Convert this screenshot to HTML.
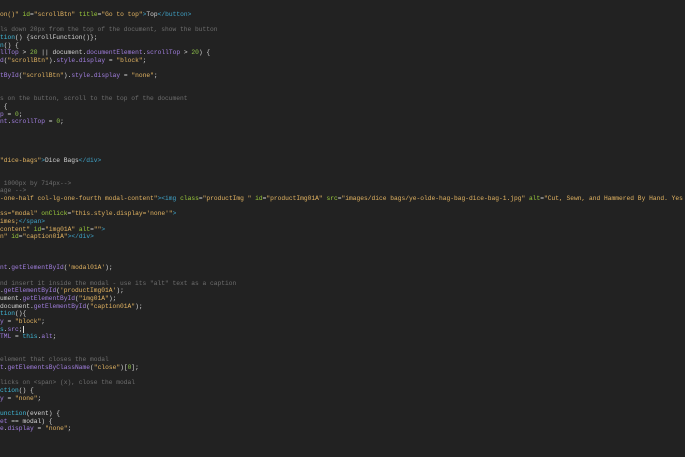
<!DOCTYPE html>
<html><head><meta charset="utf-8"><style>
html,body{margin:0;padding:0;background:#222222;width:685px;height:457px;overflow:hidden}
pre{margin:0;position:absolute;left:0;top:11px;font-family:"Liberation Mono",monospace;font-size:6.25px;line-height:7.67px;color:#d4d4d4;white-space:pre}
.c{color:#6e6e6e}.a{color:#9ccc3c}.s{color:#e3b462}.t{color:#3fa3c8}.m{color:#a27fe0}.n{color:#8fc14a}.k{color:#40b8d8}
.cur{border-left:1px solid #ddd}
</style></head><body><pre>
<span class="s">on()"</span> <span class="a">id</span>=<span class="s">"scrollBtn"</span> <span class="a">title</span>=<span class="s">"Go to top"</span><span class="t">&gt;</span>Top<span class="t">&lt;/button&gt;</span>

<span class="c">ls down 20px from the top of the document, show the button</span>
<span class="k">tion</span>() {scrollFunction()};
<span class="k">n</span>() {
<span class="m">llTop</span> &gt; <span class="n">20</span> || document.<span class="m">documentElement</span>.<span class="m">scrollTop</span> &gt; <span class="n">20</span>) {
<span class="m">d</span>(<span class="s">"scrollBtn"</span>).<span class="m">style</span>.<span class="m">display</span> = <span class="s">"block"</span>;

<span class="m">tById</span>(<span class="s">"scrollBtn"</span>).<span class="m">style</span>.<span class="m">display</span> = <span class="s">"none"</span>;


<span class="c">s on the button, scroll to the top of the document</span>
 {
<span class="m">p</span> = <span class="n">0</span>;
<span class="m">nt</span>.<span class="m">scrollTop</span> = <span class="n">0</span>;




<span class="s">"dice-bags"</span><span class="t">&gt;</span>Dice Bags<span class="t">&lt;/div&gt;</span>


<span class="c"> 1000px by 714px--&gt;</span>
<span class="c">age --&gt;</span>
<span class="s">-one-half col-lg-one-fourth modal-content"</span><span class="t">&gt;&lt;img</span> <span class="a">class</span>=<span class="s">"productImg "</span> <span class="a">id</span>=<span class="s">"productImg01A"</span> <span class="a">src</span>=<span class="s">"images/dice bags/ye-olde-hag-bag-dice-bag-1.jpg"</span> <span class="a">alt</span>=<span class="s">"Cut, Sewn, and Hammered By Hand. Yes</span>

<span class="s">ss="modal"</span> <span class="a">onClick</span>=<span class="s">"this.style.display='none'"</span><span class="t">&gt;</span>
<span class="s">imes;</span><span class="t">&lt;/span&gt;</span>
<span class="s">content"</span> <span class="a">id</span>=<span class="s">"img01A"</span> <span class="a">alt</span>=<span class="s">""</span><span class="t">&gt;</span>
<span class="s">n"</span> <span class="a">id</span>=<span class="s">"caption01A"</span><span class="t">&gt;&lt;/div&gt;</span>



<span class="m">nt</span>.<span class="m">getElementById</span>(<span class="s">'modal01A'</span>);

<span class="c">nd insert it inside the modal - use its "alt" text as a caption</span>
.<span class="m">getElementById</span>(<span class="s">'productImg01A'</span>);
ument.<span class="m">getElementById</span>(<span class="s">"img01A"</span>);
document.<span class="m">getElementById</span>(<span class="s">"caption01A"</span>);
<span class="k">tion</span>(){
<span class="m">y</span> = <span class="s">"block"</span>;
<span class="k">s</span>.<span class="m">src</span>;<span class="cur"></span>
<span class="m">TML</span> = <span class="k">this</span>.<span class="m">alt</span>;


<span class="c">element that closes the modal</span>
<span class="m">t</span>.<span class="m">getElementsByClassName</span>(<span class="s">"close"</span>)[<span class="n">0</span>];

<span class="c">licks on &lt;span&gt; (x), close the modal</span>
<span class="k">ction</span>() {
<span class="m">y</span> = <span class="s">"none"</span>;

<span class="k">unction</span>(event) {
<span class="m">et</span> == modal) {
<span class="m">e</span>.<span class="m">display</span> = <span class="s">"none"</span>;
</pre></body></html>
